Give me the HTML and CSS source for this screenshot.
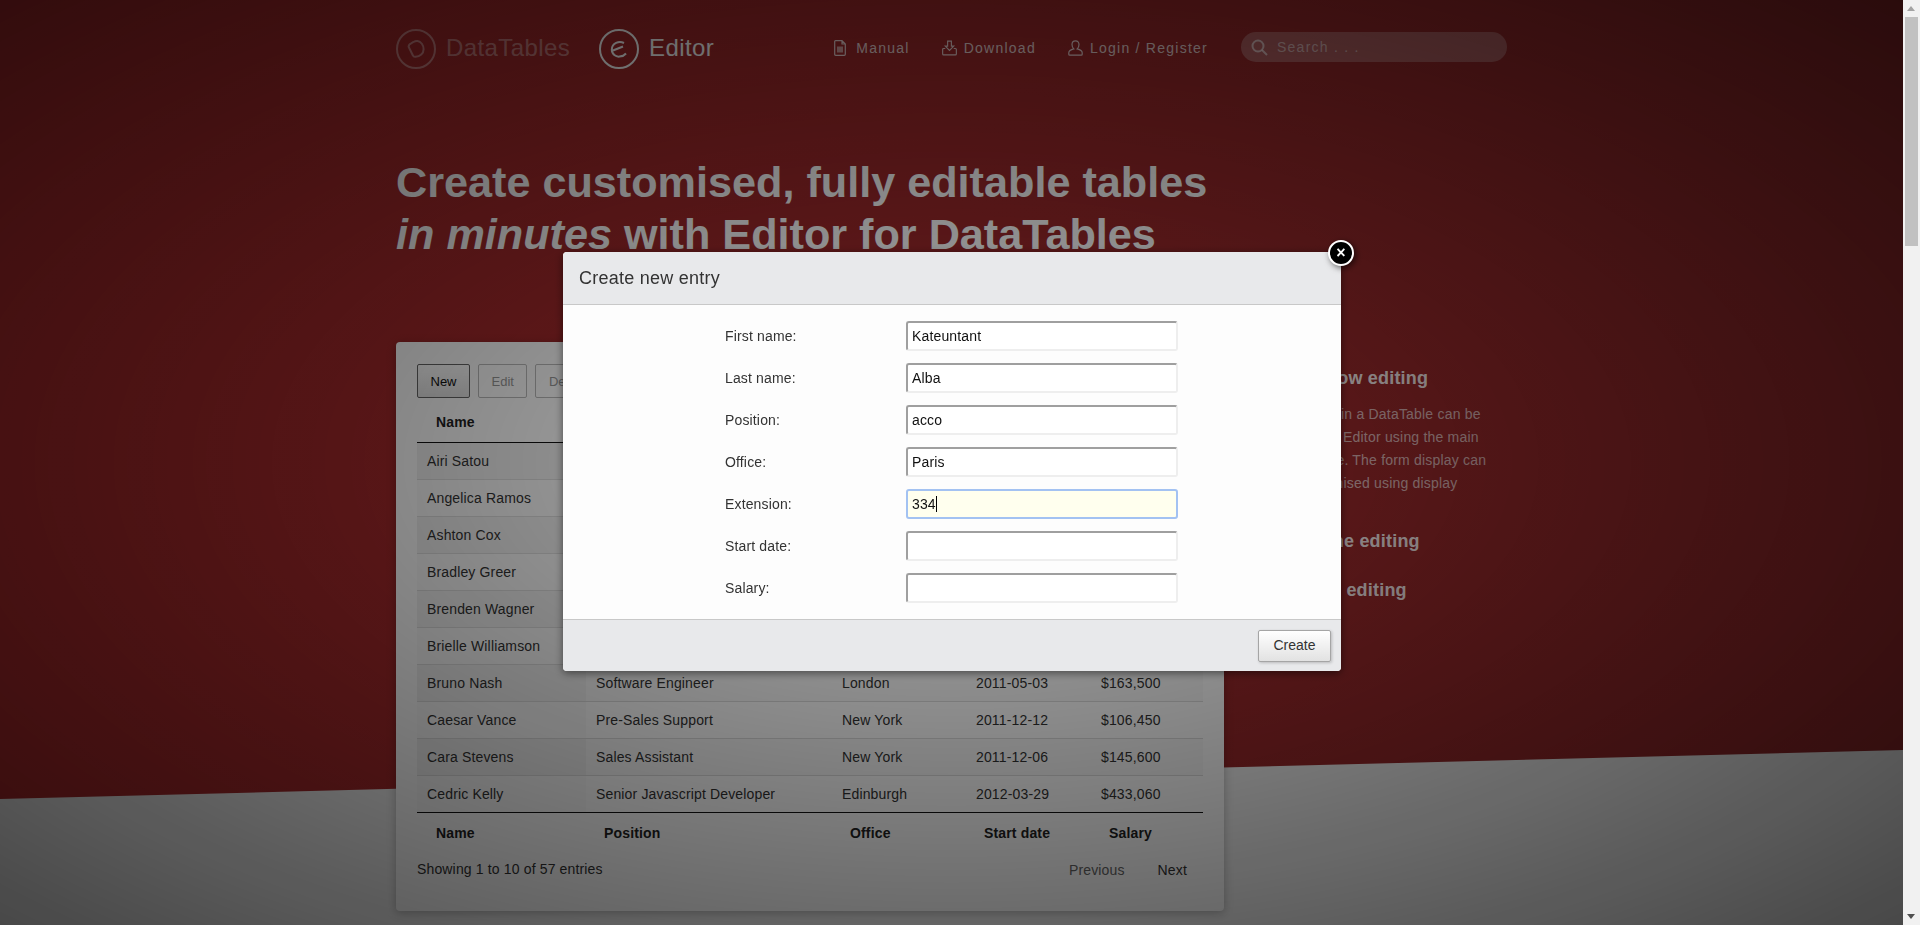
FILE: index.html
```html
<!DOCTYPE html>
<html lang="en">
<head>
    <meta charset="UTF-8">
    <title>Editor for DataTables</title>
    <link rel="stylesheet" href="styles.css">
</head>
<body>
    <div class="page">
        <div class="hero-bg"></div>

        <nav class="topbar">
            <a class="brand brand-dim">
                <svg class="brand-logo" viewBox="0 0 40 40"><circle cx="20" cy="20" r="19"/><path d="M12.6 17.7Q12.6 15.5 15.1 14.3L17.5 13Q19.5 11.8 21.5 12C25 12.5 27.6 16 27.6 20.3C27.6 24.5 24 27.7 19.7 27.7Q17.5 28 16.9 26.5Z"/></svg>
                <span>DataTables</span>
            </a>
            <a class="brand">
                <svg class="brand-logo" viewBox="0 0 40 40"><circle cx="20" cy="20" r="19"/><path d="M25 14C20 11.5 13 14 12.8 20.5C12.8 25.5 17 28 20.5 27.6C23 27.4 25.5 26.3 27 24.5M14 21.5L24 17.5"/></svg>
                <span>Editor</span>
            </a>
            <div class="links">
                <a class="link">
                    <svg class="link-icon" viewBox="0 0 12 16"><path d="M1.5 .7H8L11.3 4V14.3Q11.3 15.3 10.3 15.3H1.7Q.7 15.3 .7 14.3V1.5Q.7 .7 1.5 .7ZM8 .7V4H11.3"/><path class="fill" d="M3 6.5H9V12.5H3Z"/></svg>
                    Manual
                </a>
                <a class="link link-wide">
                    <svg class="link-icon" viewBox="0 0 16 16"><path d="M6 .7H10V6H12.5L8 10.6 3.5 6H6ZM3.5 8.5H1.7Q.7 8.5 .7 9.5V14.3Q.7 15.3 1.7 15.3H14.3Q15.3 15.3 15.3 14.3V9.5Q15.3 8.5 14.3 8.5H12.5"/></svg>
                    Download
                </a>
                <a class="link link-wide">
                    <svg class="link-icon" viewBox="0 0 15 16"><path d="M7.5 .8C5.3 .8 4 2.4 4 4.6C4 6.6 5 8.2 5.8 8.9C3 9.6 .8 10.8 .8 12.8V14.2Q.8 15.2 1.8 15.2H13.2Q14.2 15.2 14.2 14.2V12.8C14.2 10.8 12 9.6 9.2 8.9C10 8.2 11 6.6 11 4.6C11 2.4 9.7 .8 7.5 .8Z"/></svg>
                    Login / Register
                </a>
            </div>
            <label class="search">
                <svg class="search-icon" viewBox="0 0 17 17"><circle cx="7" cy="7" r="5.5"/><path d="M11 11L16 16"/></svg>
                <input class="search-input" type="text" placeholder="Search . . .">
            </label>
        </nav>

        <h1 class="title">Create customised, fully editable tables<br><em>in minutes</em> with Editor for DataTables</h1>

        <main class="content">
            <section class="card">
                <div class="toolbar">
                    <button class="tbtn">New</button>
                    <button class="tbtn tbtn-off">Edit</button>
                    <button class="tbtn tbtn-off">Delete</button>
                </div>
                <table class="grid">
                    <colgroup>
                        <col class="c-name"><col class="c-pos"><col class="c-office"><col class="c-date"><col class="c-sal">
                    </colgroup>
                    <thead>
                        <tr><th>Name</th><th>Position</th><th>Office</th><th>Start date</th><th>Salary</th></tr>
                    </thead>
                    <tbody>
                        <tr><td>Airi Satou</td><td>Accountant</td><td>Tokyo</td><td>2008-11-28</td><td>$162,700</td></tr>
                        <tr><td>Angelica Ramos</td><td>Chief Executive Officer (CEO)</td><td>London</td><td>2009-10-09</td><td>$1,200,000</td></tr>
                        <tr><td>Ashton Cox</td><td>Junior Technical Author</td><td>San Francisco</td><td>2009-01-12</td><td>$86,000</td></tr>
                        <tr><td>Bradley Greer</td><td>Software Engineer</td><td>London</td><td>2012-10-13</td><td>$132,000</td></tr>
                        <tr><td>Brenden Wagner</td><td>Software Engineer</td><td>San Francisco</td><td>2011-06-07</td><td>$206,850</td></tr>
                        <tr><td>Brielle Williamson</td><td>Integration Specialist</td><td>New York</td><td>2012-12-02</td><td>$372,000</td></tr>
                        <tr><td>Bruno Nash</td><td>Software Engineer</td><td>London</td><td>2011-05-03</td><td>$163,500</td></tr>
                        <tr><td>Caesar Vance</td><td>Pre-Sales Support</td><td>New York</td><td>2011-12-12</td><td>$106,450</td></tr>
                        <tr><td>Cara Stevens</td><td>Sales Assistant</td><td>New York</td><td>2011-12-06</td><td>$145,600</td></tr>
                        <tr><td>Cedric Kelly</td><td>Senior Javascript Developer</td><td>Edinburgh</td><td>2012-03-29</td><td>$433,060</td></tr>
                    </tbody>
                    <tfoot>
                        <tr><th>Name</th><th>Position</th><th>Office</th><th>Start date</th><th>Salary</th></tr>
                    </tfoot>
                </table>
                <div class="card-foot">
                    <span>Showing 1 to 10 of 57 entries</span>
                    <div class="pager">
                        <a class="page-off">Previous</a>
                        <a>Next</a>
                    </div>
                </div>
            </section>

            <aside class="side">
                <h3 class="side-head side-row">Full row editing</h3>
                <p class="side-text">Each row in a DataTable can be<br>edited via Editor using the main<br>table page. The form display can<br>be customised using display</p>
                <h3 class="side-head side-inline">Inline editing</h3>
                <h3 class="side-head side-bubble">Bubble editing</h3>
            </aside>
        </main>
    </div>

    <div class="backdrop"></div>

    <div class="modal">
        <button class="modal-close">&times;</button>
        <div class="modal-head">Create new entry</div>
        <form class="modal-body">
            <div class="field"><label>First name:</label><input class="inp" type="text" value="Kateuntant"></div>
            <div class="field"><label>Last name:</label><input class="inp" type="text" value="Alba"></div>
            <div class="field"><label>Position:</label><input class="inp" type="text" value="acco"></div>
            <div class="field"><label>Office:</label><input class="inp" type="text" value="Paris"></div>
            <div class="field"><label>Extension:</label><div class="inp inp-focus">334<span class="caret"></span></div></div>
            <div class="field"><label>Start date:</label><input class="inp" type="text"></div>
            <div class="field"><label>Salary:</label><input class="inp" type="text"></div>
        </form>
        <div class="modal-foot">
            <button class="create">Create</button>
        </div>
    </div>

    <div class="scrollbar">
        <span class="arrow arrow-up"></span>
        <span class="thumb"></span>
        <span class="arrow arrow-down"></span>
    </div>
</body>
</html>
```

FILE: styles.css
```css
*{
    box-sizing: border-box;
}

html, body{
    margin: 0;
    padding: 0;
    height: 100%;
    overflow: hidden;
}

body{
    background-color: #f0f0f0;
    font-family: "Liberation Sans", Arial, sans-serif;
    font-size: 14px;
    letter-spacing: 0.15px;
    color: #333;
}

.page{
    position: relative;
    width: 1903px;
    height: 925px;
    overflow: hidden;
}

/* red slanted header behind everything */
.hero-bg{
    position: absolute;
    top: 0;
    left: 0;
    width: 100%;
    height: 800px;
    background: linear-gradient(to right, #aa2a2c, #8e282a);
    clip-path: polygon(0 0, 100% 0, 100% 750px, 0 799px);
}

.topbar{
    position: relative;
    width: 1111px;
    height: 98px;
    margin: 0 auto;
    display: flex;
    align-items: center;
}

.brand{
    display: flex;
    align-items: center;
    gap: 10px;
    margin-right: 29px;
    font-size: 24px;
    letter-spacing: 0.4px;
    color: #fff;
}

.brand span{
    padding-bottom: 2px;
}

.brand-dim{
    color: rgba(255, 255, 255, 0.4);
}

.brand-logo{
    width: 40px;
    height: 40px;
    fill: none;
    stroke: currentColor;
    stroke-width: 2;
}

.links{
    display: flex;
    align-items: center;
    gap: 32px;
    margin-left: auto;
    margin-right: 33px;
    padding-bottom: 2px;
}

.link{
    display: flex;
    align-items: center;
    gap: 10px;
    letter-spacing: 1.25px;
    color: rgba(255, 255, 255, 0.8);
}

.link-icon{
    height: 16px;
    width: 12px;
    fill: none;
    stroke: currentColor;
    stroke-width: 1.2;
}

.link-wide{
    gap: 7px;
}

.link-wide .link-icon{
    width: 15px;
}

.link-icon .fill{
    fill: currentColor;
    stroke: none;
    opacity: 0.7;
}

.search{
    display: flex;
    align-items: center;
    gap: 9px;
    width: 266px;
    height: 30px;
    margin-bottom: 4px;
    padding-left: 10px;
    border-radius: 15px;
    background-color: rgba(255, 255, 255, 0.26);
}

.search-icon{
    width: 17px;
    height: 17px;
    fill: none;
    stroke: rgba(255, 255, 255, 0.6);
    stroke-width: 2;
}

.search-input{
    flex: 1;
    min-width: 0;
    border: 0;
    padding: 0;
    background: transparent;
    font-family: inherit;
    font-size: 14px;
    letter-spacing: 1.25px;
    color: #fff;
}

.search-input::placeholder{
    color: rgba(255, 255, 255, 0.55);
}

.title{
    position: relative;
    width: 1111px;
    margin: 58px auto 82px;
    font-size: 43.2px;
    line-height: 52px;
    letter-spacing: 0;
    font-weight: bold;
    color: #fff;
}

.content{
    position: relative;
    width: 1111px;
    margin: 0 auto;
    display: flex;
    gap: 55px;
}

.card{
    flex: none;
    width: 828px;
    height: 569px;
    padding: 22px 21px 0;
    background-color: #fff;
    border-radius: 4px;
    box-shadow: 0 2px 10px rgba(0, 0, 0, 0.25);
}

.toolbar{
    display: flex;
    gap: 8px;
    margin-bottom: 4px;
}

.tbtn{
    height: 34px;
    padding: 0 12.5px;
    border: 1px solid #666;
    border-radius: 2px;
    background: linear-gradient(to bottom, #fff, #e4e4e4);
    font-family: inherit;
    font-size: 13px;
    color: #111;
}

.tbtn-off{
    border-color: #bbb;
    background: transparent;
    color: #999;
}

.grid{
    width: 786px;
    table-layout: fixed;
    border-collapse: separate;
    border-spacing: 0;
}

.c-name{ width: 169px; }
.c-pos{ width: 246px; }
.c-office{ width: 134px; }
.c-date{ width: 125px; }
.c-sal{ width: 112px; }

.grid th{
    height: 41px;
    padding: 0 18px;
    text-align: left;
    font-weight: bold;
    color: #222;
}

.grid th:first-child{
    padding-left: 19px;
}

.grid thead th{
    border-bottom: 1px solid #111;
}

.grid tfoot th{
    border-top: 1px solid #111;
}

.grid td{
    height: 37px;
    padding: 0 10px 1px;
    border-top: 1px solid #ddd;
    white-space: nowrap;
    overflow: hidden;
}

.grid tbody tr:first-child td{
    height: 36px;
    border-top: 0;
}

.grid tbody tr:nth-child(odd) td{
    background-color: #f9f9f9;
}

.grid tbody td:first-child{
    background-color: #fafafa;
}

.grid tbody tr:nth-child(odd) td:first-child{
    background-color: #f1f1f1;
}

.card-foot{
    display: flex;
    justify-content: space-between;
    align-items: center;
    height: 20px;
    margin-top: 6px;
    padding-right: 16px;
}

.pager{
    display: flex;
    gap: 33px;
    padding-top: 2px;
}

.page-off{
    color: #666;
}

.side{
    flex: 1;
    min-width: 0;
    color: #fff;
    white-space: nowrap;
}

.side-head{
    margin: 0;
    font-size: 18px;
    line-height: 22px;
    font-weight: bold;
    letter-spacing: 0.2px;
    color: rgba(255, 255, 255, 0.9);
}

.side-row{
    margin-top: 25px;
    margin-left: 13px;
}

.side-inline{
    margin-top: 35px;
    margin-left: 27px;
}

.side-bubble{
    margin-top: 27px;
}

.side-text{
    margin: 14px 0 0 -2px;
    line-height: 23px;
    letter-spacing: 0.2px;
    color: rgba(255, 255, 255, 0.65);
}

.backdrop{
    position: fixed;
    top: 0;
    left: 0;
    width: 1903px;
    height: 925px;
    background: radial-gradient(ellipse farthest-corner at center, rgba(0, 0, 0, 0.3) 0%, rgba(0, 0, 0, 0.7) 100%);
}

.modal{
    position: fixed;
    top: 252px;
    left: 563px;
    width: 778px;
    height: 419px;
    display: flex;
    flex-direction: column;
    background-color: #fdfdfd;
    border-radius: 4px;
    box-shadow: 0 2px 8px rgba(0, 0, 0, 0.5);
}

.modal-close{
    position: absolute;
    top: -12px;
    right: -13px;
    width: 26px;
    height: 26px;
    padding: 0;
    border: 2px solid #fff;
    border-radius: 50%;
    background-color: #000;
    box-shadow: 2px 2px 6px rgba(0, 0, 0, 0.6);
    font-family: inherit;
    font-size: 16px;
    line-height: 20px;
    font-weight: bold;
    color: #fff;
}

.modal-head{
    flex: none;
    height: 53px;
    padding: 0 16px;
    border-bottom: 1px solid #c8c8c8;
    border-radius: 4px 4px 0 0;
    background-color: #e8e9eb;
    font-size: 18px;
    line-height: 52px;
    letter-spacing: 0.25px;
    color: #333;
}

.modal-body{
    flex: 1;
    padding: 16px 0 0 162px;
    display: flex;
    flex-direction: column;
    gap: 12px;
}

.field{
    display: flex;
    align-items: center;
    height: 30px;
}

.field label{
    width: 181px;
}

.inp{
    width: 272px;
    height: 30px;
    padding: 0 4px;
    border: 2px solid;
    border-color: #9f9f9f #eee #eee #9f9f9f;
    border-radius: 3px;
    background-color: #fff;
    font-family: inherit;
    font-size: 14px;
    letter-spacing: 0.15px;
    color: #111;
    outline: none;
}

.inp-focus{
    display: flex;
    align-items: center;
    border-color: #a3c2f2;
    background-color: #ffffee;
}

.caret{
    display: block;
    width: 1px;
    height: 16px;
    background-color: #000;
}

.modal-foot{
    flex: none;
    height: 52px;
    display: flex;
    justify-content: flex-end;
    padding: 10px 10px 0 0;
    border-top: 1px solid #c8c8c8;
    border-radius: 0 0 4px 4px;
    background-color: #e8e9eb;
}

.create{
    width: 73px;
    height: 32px;
    padding: 0 0 2px;
    border: 1px solid #a5a5a5;
    border-radius: 2px;
    background: linear-gradient(to bottom, #fff, #e2e2e2);
    box-shadow: 1px 1px 3px rgba(0, 0, 0, 0.2);
    font-family: inherit;
    font-size: 14px;
    color: #333;
}

/* windows style bar, the shot has it at the right edge */
.scrollbar{
    position: fixed;
    top: 0;
    right: 0;
    width: 17px;
    height: 925px;
    padding: 0 2px;
    background-color: #f1f1f1;
}

.thumb{
    position: absolute;
    top: 17px;
    left: 2px;
    width: 13px;
    height: 229px;
    background-color: #c1c1c1;
}

.arrow{
    position: absolute;
    left: 4px;
    width: 0;
    height: 0;
    border-left: 4.5px solid transparent;
    border-right: 4.5px solid transparent;
}

.arrow-up{
    top: 6px;
    border-bottom: 5px solid #a3a3a3;
}

.arrow-down{
    bottom: 6px;
    border-top: 5px solid #505050;
}
```
